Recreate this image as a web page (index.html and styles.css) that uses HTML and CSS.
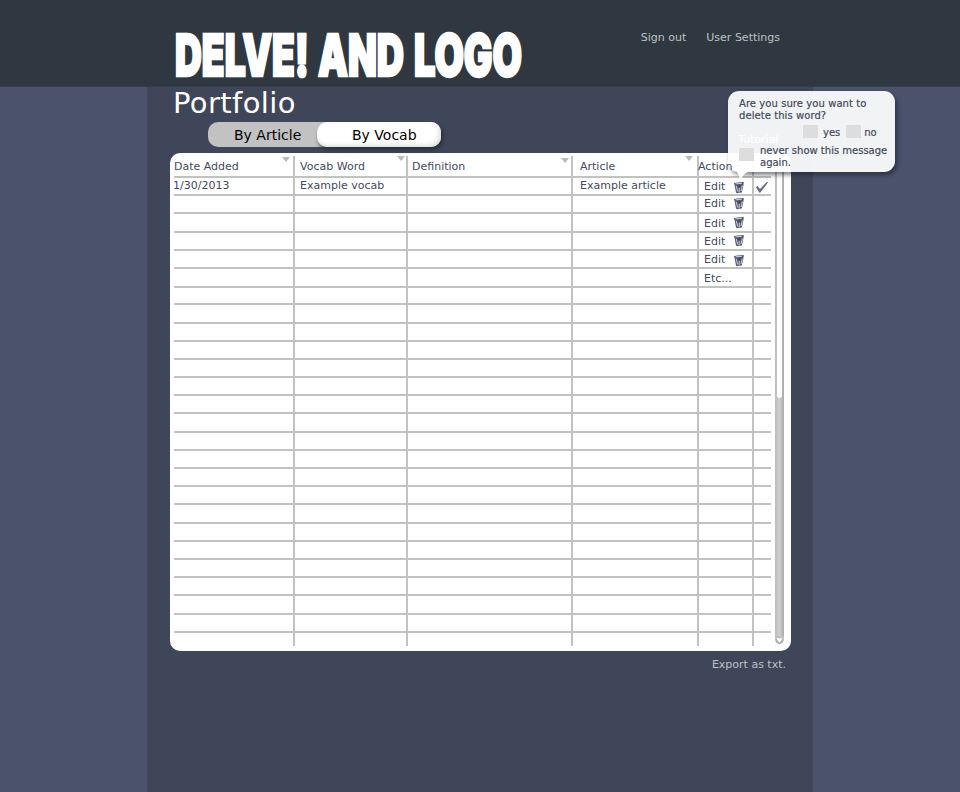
FILE: index.html
```html
<!DOCTYPE html>
<html lang="en">
<head>
<meta charset="utf-8">
<title>Portfolio</title>
<link rel="stylesheet" href="styles.css">
</head>
<body>
<svg class="defs" aria-hidden="true">
  <symbol id="trash" viewBox="0 0 12 12">
    <path d="M.8 1.8 L4 1 L10.8 .6 L10.6 3 L8.8 11 L4 11.8 L3 11 L1.6 3.6Z" fill="#565b73"/>
    <path d="M2.6 2.3 L8.8 1.8 M3.2 4.4 L4.7 10 M6.4 6 L6.1 11 M9.3 4 L8 9.6" stroke="#dcdde3" stroke-width=".9" fill="none"/>
    <path d="M4.5 4.2 L8 3.8 L6.6 6.2Z" fill="#3c4158"/>
  </symbol>
</svg>
<header class="top">
  <svg class="logo" width="350" height="48" viewBox="0 0 350 48">
    <text x="1" y="44.5" textLength="134" lengthAdjust="spacingAndGlyphs">DELVE!</text>
    <text x="144" y="44.5" textLength="86" lengthAdjust="spacingAndGlyphs">AND</text>
    <text x="240" y="44.5" textLength="108" lengthAdjust="spacingAndGlyphs">LOGO</text>
  </svg>
  <nav><a>Sign out</a><a>User Settings</a></nav>
</header>
<main>
  <h1>Portfolio</h1>
  <div class="tabs"><span class="tab">By Article</span><span class="tab active">By Vocab</span></div>
  <section class="panel">
    <div class="table">
      <div class="row head">
        <span class="c1">Date Added<i></i></span><span class="c2">Vocab Word<i></i></span><span class="c3">Definition<i></i></span><span class="c4">Article<i></i></span><span class="c5"><em>Action</em></span><span class="c6"></span>
      </div>
      <div class="row first"><span class="c1">1/30/2013</span><span class="c2">Example vocab</span><span class="c3"></span><span class="c4">Example article</span><span class="c5">Edit<svg><use href="#trash"/></svg></span><span class="c6"><svg class="check" viewBox="0 0 14 12"><path d="M1 6 L2.6 5 L5 8 L12 .8 L13 1.4 L5.4 11.4 L4.2 11.4Z" fill="#666b82"/></svg></span></div>
      <div class="row r2"><span class="c1"></span><span class="c2"></span><span class="c3"></span><span class="c4"></span><span class="c5">Edit<svg><use href="#trash"/></svg></span><span class="c6"></span></div>
      <div class="row r3"><span class="c1"></span><span class="c2"></span><span class="c3"></span><span class="c4"></span><span class="c5">Edit<svg><use href="#trash"/></svg></span><span class="c6"></span></div>
      <div class="row r4"><span class="c1"></span><span class="c2"></span><span class="c3"></span><span class="c4"></span><span class="c5">Edit<svg><use href="#trash"/></svg></span><span class="c6"></span></div>
      <div class="row r5"><span class="c1"></span><span class="c2"></span><span class="c3"></span><span class="c4"></span><span class="c5">Edit<svg><use href="#trash"/></svg></span><span class="c6"></span></div>
      <div class="row r6"><span class="c1"></span><span class="c2"></span><span class="c3"></span><span class="c4"></span><span class="c5">Etc...</span><span class="c6"></span></div>
    </div>
    <div class="scroll"><div class="thumb"></div><svg width="9" height="9" viewBox="0 0 9 9"><path d="M0 0H9V9H0Z" fill="#fff"/><path d="M.8 1.5V3.8A3.7 3.7 0 0 0 8.2 3.8V1.5L4.5 6.4Z" fill="#b4b4b4" stroke="#b0b0b0" stroke-width="1.2"/><path d="M0 0H9V3L7.5 2.5H1.5L0 3Z" fill="#c0c0c0"/><path d="M1.2 2.5H7.8L4.5 6.4Z" fill="#fff"/></svg></div>
  </section>
  <a class="export">Export as txt.</a>
  <aside class="popup">
    <p>Are you sure you want to<br>delete this word?</p>
    <div class="choices"><b></b><span>yes</span><b></b><span>no</span></div>
    <span class="tutorial">Tutorial</span>
    <div class="never"><b></b><span>never show this message<br>again.</span></div>
    <svg class="tail" width="14" height="9" viewBox="0 0 14 9"><path d="M2 0H13Q8 2 5 9Q5 4 2 0Z" fill="#fff"/></svg>
  </aside>
</main>
<script src="rows.js"></script>
</body>
</html>
```
FILE: rows.js
```js
// Fill the table with its empty rows.
const table = document.querySelector('.table');
for (let n = 7; n <= 26; n++) {
  const row = document.createElement('div');
  row.className = n === 26 ? 'row last' : 'row';
  for (let c = 1; c <= 6; c++) {
    const cell = document.createElement('span');
    cell.className = 'c' + c;
    row.append(cell);
  }
  table.append(row);
}
```
FILE: styles.css
```css
* { box-sizing: border-box; }
body { margin: 0; height: 792px; overflow: hidden; background: #4b526b; font: 11px/14px "DejaVu Sans", Verdana, sans-serif; color: #444a61; }
.defs { position: absolute; width: 0; height: 0; }
.top { height: 87px; background: #2f3840; padding: 31px 180px 0 174px; display: flex; justify-content: space-between; border-bottom: 1px solid #353e4a; }
.logo { overflow: visible; }
.logo text { font: 900 58px Inter, sans-serif; fill: #fff; stroke: #fff; stroke-width: 2.6; }
.top nav { display: flex; gap: 20px; color: #bfc1c3; height: 14px; }
main { position: relative; width: 666px; height: 705px; margin-left: 147px; background: #404659; padding: 0 22px 0 23px; }
h1 { margin: 0 0 0 3px; height: 35px; color: #fff; font: 29px/33px "DejaVu Sans", sans-serif; letter-spacing: .4px; }
.tabs { display: flex; width: 233px; height: 25px; margin-left: 38px; border-radius: 10px; background: #c2c2c2; font-size: 14px; line-height: 26px; color: #000; }
.tab { width: 109px; padding-left: 26px; white-space: nowrap; }
.tab.active { width: 124px; padding-left: 35px; background: #fff; border-radius: 10px; box-shadow: inset -2px -2px 4px #dedede, 2px 3px 4px #2a2e3d; }
.panel { display: flex; width: 621px; height: 498px; margin-top: 6px; background: #fff; border-radius: 10px; padding-left: 4px; }
.table { width: 597px; }
.row { display: grid; grid-template-columns: 121px 113px 165px 126px 55px 17px; height: 18.2px; }
.row span { position: relative; border-right: 2px solid #c2c2c2; border-bottom: 2px solid #c2c2c2; white-space: nowrap; }
.row .c6 { border-right: 0; }
.row .c2, .row .c5 { padding-left: 5px; }
.row .c3 { padding-left: 4px; }
.row .c4 { padding-left: 7px; }
.head { height: 25px; }
.head span { margin-top: 3px; padding-top: 4px; }
.row.head .c5 { padding-left: 0; text-indent: -1px; }
.head em { position: relative; z-index: 2; font-style: normal; }
.head i { position: absolute; right: 3px; top: 1px; border: 4px solid transparent; border-top: 5px solid #b9b9b9; border-bottom: 0; }
.head .c2 i { right: 1px; top: 0; }
.head .c3 i { right: 2px; top: 2px; }
.head .c4 i { right: 4px; top: 0; }
.first .c1, .first .c2, .first .c4 { padding-top: 1px; }
.row.first .c1 { text-indent: -1px; }
.row .c5 svg { position: absolute; left: 34px; top: 2px; width: 12px; height: 13px; }
.row.first .c5 svg, .row.r5 .c5 svg { top: 3px; }
.row.r2 .c5 svg, .row.r4 .c5 svg { top: 1px; }
.first .c5 { padding-top: 2px; }
.r2 .c5 { padding-top: 1px; }
.r3 .c5 { padding-top: 3px; }
.r4 .c5, .r5 .c5 { padding-top: 2px; }
.r6 .c5 { padding-top: 3px; }
.check { display: block; width: 14px; height: 12px; margin: 3px 0 0 1px; }
.last { height: 13px; }
.row.last span { border-bottom: 0; }
.scroll { position: relative; width: 9px; height: 482px; margin: 9px 0 0 4px; border-radius: 5px 5px 0 0; background: linear-gradient(90deg, #bbb, #cfcfcf 50%, #a9a9a9); }
.thumb { width: 5px; height: 227px; margin: 9px 0 0 2px; background: #fff; border-radius: 3px; }
.scroll svg { position: absolute; left: 0; bottom: -1px; }
.export { display: block; margin: 7px 5px 0 0; text-align: right; color: #bfc1c7; }
.popup { position: absolute; left: 581px; top: 4px; width: 167px; height: 81px; padding: 7px 0 0 11px; border-radius: 11px; background: rgba(255,255,255,.93); box-shadow: 2px 3px 4px rgba(25,28,42,.55); font-size: 10px; line-height: 12px; white-space: nowrap; -webkit-text-stroke: .2px #444a61; }
.popup p { margin: 0; letter-spacing: .07px; }
.popup b { width: 15px; height: 13px; background: #ddd; }
.choices { display: flex; margin: 3px 0 0 64px; }
.choices span { margin: 2px 6px 0 5px; }
.choices span:last-child { margin-left: 3px; }
.never { display: flex; gap: 6px; margin-top: 6px; }
.never b { margin-top: 3px; }
.tutorial { position: absolute; left: 10px; top: 43px; font-size: 11px; color: #fff; -webkit-text-stroke: .2px #fff; }
.tail { position: absolute; left: 7px; top: 81px; }
```
